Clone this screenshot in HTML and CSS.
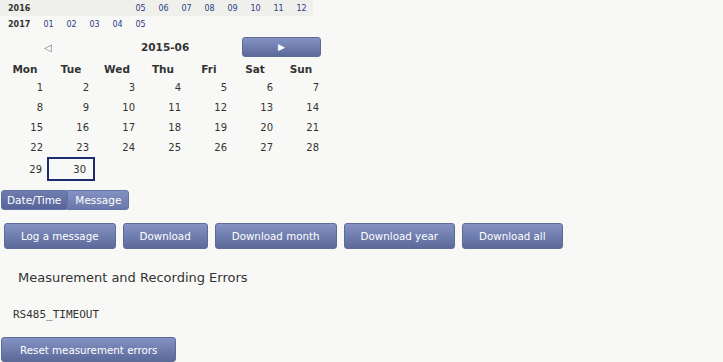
FILE: index.html
```html
<!DOCTYPE html>
<html lang="en">
<head>
    <meta charset="UTF-8">
    <meta name="viewport" content="width=device-width, initial-scale=1.0">
    <title>Data Logger</title>
    <link rel="stylesheet" href="styles.css">
</head>
<body>

    <table class="years">
        <tr class="odd">
            <th>2016</th>
            <td></td><td></td><td></td><td></td>
            <td><a href="#">05</a></td><td><a href="#">06</a></td><td><a href="#">07</a></td><td><a href="#">08</a></td>
            <td><a href="#">09</a></td><td><a href="#">10</a></td><td><a href="#">11</a></td><td><a href="#">12</a></td>
        </tr>
        <tr>
            <th>2017</th>
            <td><a href="#">01</a></td><td><a href="#">02</a></td><td><a href="#">03</a></td><td><a href="#">04</a></td>
            <td><a href="#">05</a></td>
            <td></td><td></td><td></td><td></td><td></td><td></td><td></td>
        </tr>
    </table>

    <div class="month-nav">
        <span class="prev">&#9665;</span>
        <span class="month-title">2015-06</span>
        <button class="btn next">&#9654;</button>
    </div>

    <table class="calendar">
        <tr><th>Mon</th><th>Tue</th><th>Wed</th><th>Thu</th><th>Fri</th><th>Sat</th><th>Sun</th></tr>
        <tr><td>1</td><td>2</td><td>3</td><td>4</td><td>5</td><td>6</td><td>7</td></tr>
        <tr><td>8</td><td>9</td><td>10</td><td>11</td><td>12</td><td>13</td><td>14</td></tr>
        <tr><td>15</td><td>16</td><td>17</td><td>18</td><td>19</td><td>20</td><td>21</td></tr>
        <tr><td>22</td><td>23</td><td>24</td><td>25</td><td>26</td><td>27</td><td>28</td></tr>
        <tr class="last"><td>29</td><td class="selected">30</td><td></td><td></td><td></td><td></td><td></td></tr>
    </table>

    <div class="tabs">
        <button class="tab active">Date/Time</button>
        <button class="tab">Message</button>
    </div>

    <div class="actions">
        <button class="btn action">Log a message</button>
        <button class="btn action">Download</button>
        <button class="btn action">Download month</button>
        <button class="btn action">Download year</button>
        <button class="btn action">Download all</button>
    </div>

    <h2 class="errors-title">Measurement and Recording Errors</h2>
    <pre class="error-list">RS485_TIMEOUT</pre>
    <button class="btn reset">Reset measurement errors</button>

</body>
</html>
```

FILE: styles.css
```css
body {
    font-family: "DejaVu Sans", sans-serif;
    background-color: #f8f9f6;
    color: #333;
    margin: 0;
}
a {
    color: #2c3c84;
    text-decoration: none;
}
.years {
    border-collapse: collapse;
    width: 313px;
    font-size: 8px;
}
.years tr {
    height: 16px;
}
.years tr.odd {
    background-color: #eff0ec;
}
.years th {
    width: 37px;
    padding: 0 0 0 8px;
    text-align: left;
    color: #333;
    box-sizing: border-box;
}
.years td {
    width: 23px;
    padding: 0;
    text-align: center;
}
.month-nav {
    display: flex;
    align-items: center;
    width: 321px;
    height: 20px;
    margin-top: 5px;
}
.prev {
    color: #777;
    font-size: 10px;
    margin-left: 44px;
    width: 97px;
}
.month-title {
    font-weight: bold;
    font-size: 10.5px;
    width: 101px;
    margin-top: -1px;
}
.btn {
    font-family: "DejaVu Sans", sans-serif;
    color: #fff;
    border: 1px solid #5d6b98;
    border-radius: 3px;
    background: linear-gradient(#8492c4, #5c6a9a);
    padding: 0 16px;
    cursor: pointer;
}
.next {
    width: 79px;
    height: 20px;
    padding: 0;
    font-size: 9px;
}
.calendar {
    border-collapse: collapse;
    margin: 3px 0 0 2px;
    font-size: 10px;
}
.calendar th {
    font-size: 10.5px;
    height: 17px;
    width: 46px;
    padding: 0;
    text-align: center;
}
.calendar td {
    height: 20px;
    padding: 0 5px 0 0;
    text-align: right;
}
.calendar td.selected {
    border: 2px solid #1e2d6e;
    padding-right: 7px;
}
.tabs {
    display: flex;
    margin: 9px 0 0 1px;
}
.tab {
    font-family: "DejaVu Sans", sans-serif;
    font-size: 10.5px;
    color: #fff;
    height: 20px;
    padding: 0 7px;
    border: 1px solid #6473a3;
    background: linear-gradient(#8391c3, #6a79ab);
}
.tab.active {
    padding: 0 5px;
    background: linear-gradient(#6e7cae, #56649a);
    border-radius: 3px 0 0 3px;
}
.tab:last-child {
    border-radius: 0 3px 3px 0;
}
.actions {
    display: flex;
    gap: 7px;
    margin: 13px 0 0 4px;
}
.action {
    height: 26px;
    font-size: 10.3px;
}
.errors-title {
    font-size: 13px;
    font-weight: normal;
    margin: 21px 0 0 18px;
}
.error-list {
    font-family: "DejaVu Sans Mono", monospace;
    font-size: 11px;
    margin: 23px 0 0 13px;
}
.reset {
    height: 25px;
    padding: 0 18px;
    font-size: 10.3px;
    margin: 16px 0 0 1px;
}
```
